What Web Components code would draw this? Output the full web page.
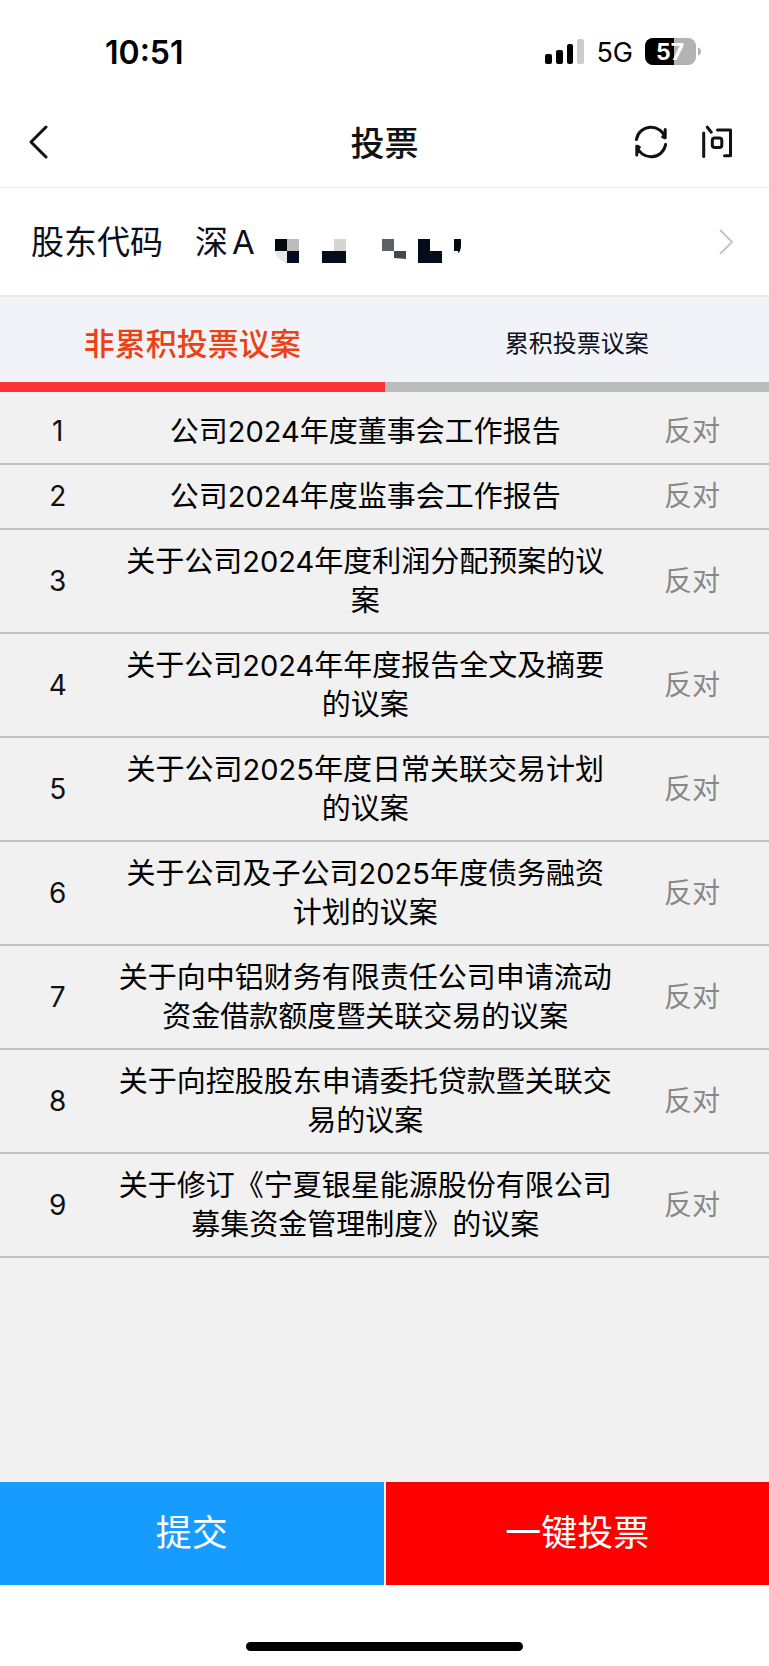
<!DOCTYPE html>
<html lang="zh-CN">
<head>
<meta charset="UTF-8">
<meta name="viewport" content="width=device-width, initial-scale=1">
<title>投票</title>
<style>
  body {
    margin: 0;
    background: #fff;
    font-family: Inter, "Noto Sans CJK SC", sans-serif;
    color: #000;
  }
</style>
</head>
<body>
<vote-app></vote-app>

<script>
class StatusBar extends HTMLElement {
  constructor() {
    super();
    this.attachShadow({ mode: 'open' });
    this.shadowRoot.innerHTML = `
      <style>
        :host {
          display: flex;
          align-items: center;
          justify-content: space-between;
          height: 104px;
          padding: 0 67px 0 105px;
          box-sizing: border-box;
        }
        time {
          font-size: 32px;
          font-weight: 600;
        }
        .right {
          display: flex;
          align-items: center;
          gap: 12px;
          font-size: 27px;
        }
        svg {
          display: block;
        }
      </style>
      <time>10:51</time>
      <div class="right">
        <svg width="39" height="26" viewBox="0 0 39 26" aria-hidden="true">
          <rect x="0" y="15" width="7" height="10" rx="2"/>
          <rect x="11" y="11" width="7" height="14" rx="2"/>
          <rect x="22" y="5" width="6" height="20" rx="2"/>
          <rect x="32" y="0" width="7" height="25" rx="2" fill="#ccc"/>
        </svg>
        <span>5G</span>
        <svg width="57" height="28" viewBox="0 0 57 28" role="img" aria-label="57%">
          <clipPath id="cell"><rect width="51" height="27" rx="8"/></clipPath>
          <g clip-path="url(#cell)">
            <rect width="51" height="27" fill="#b3b3b3"/>
            <rect width="29" height="27"/>
          </g>
          <path d="M53 9.500c4 1 4 7 0 8z" fill="#b3b3b3"/>
          <text x="25" y="22" text-anchor="middle" font-size="23" font-weight="700" fill="#fff">57</text>
        </svg>
      </div>
    `;
  }
}

class NavBar extends HTMLElement {
  constructor() {
    super();
    this.attachShadow({ mode: 'open' });
    this.shadowRoot.innerHTML = `
      <style>
        :host {
          display: grid;
          grid-template-columns: 1fr auto 1fr;
          align-items: center;
          height: 84px;
          padding: 0 0 8px;
          box-sizing: border-box;
          border-bottom: 1px solid #e8e8e8;
        }
        h1 {
          margin: 0;
          font-size: 34px;
          font-weight: 500;
          color: #111;
        }
        .back {
          justify-self: start;
          margin-left: 28px;
        }
        .actions {
          display: flex;
          justify-content: flex-end;
          gap: 32px;
          padding-right: 35px;
        }
        button {
          padding: 0;
          border: 0;
          background: none;
          color: #111;
          cursor: pointer;
        }
        svg {
          display: block;
          fill: none;
          stroke: currentColor;
          stroke-width: 3;
          stroke-linecap: round;
          stroke-linejoin: round;
        }
      </style>
      <button class="back" aria-label="返回">
        <svg width="22" height="34" viewBox="0 0 22 34"><path d="M18 2 3 17l15 15"/></svg>
      </button>
      <h1><slot></slot></h1>
      <div class="actions">
        <button aria-label="刷新">
          <svg width="34" height="34" viewBox="0 0 34 34">
            <path d="M2.400 14.500A14.800 14.800 0 0 1 31.200 12.800V4.600M31.200 12.800l-2.500-1"/>
            <path d="M31.600 19.500A14.800 14.800 0 0 1 2.800 21.200V30M2.800 21.200l2.500 1"/>
          </svg>
        </button>
        <button aria-label="问">
          <svg width="34" height="34" viewBox="0 0 34 34">
            <path d="M3.700 8v23.500M7.300 2.200l4 5M17.500 5h13v25.700h-6"/>
            <rect x="12.300" y="13" width="9.500" height="9.500" rx="2.500"/>
          </svg>
        </button>
      </div>
    `;
  }
}

class HolderCode extends HTMLElement {
  constructor() {
    super();
    this.attachShadow({ mode: 'open' });
    this.shadowRoot.innerHTML = `
      <style>
        :host {
          display: block;
          border-bottom: 2px solid #e8e8e8;
        }
        button {
          display: flex;
          align-items: center;
          width: 100%;
          height: 107px;
          padding: 0 35px 0 31px;
          border: 0;
          background: none;
          color: #0b0f1c;
          font: 33px/48px Inter, "Noto Sans CJK SC", sans-serif;
          cursor: pointer;
        }
        .label {
          margin-right: 32px;
        }
        .market {
          display: flex;
          gap: 4px;
          margin-right: 20px;
        }
        .arrow {
          margin-left: auto;
        }
        svg {
          display: block;
          flex: none;
        }
      </style>
      <button>
        <span class="label">股东代码</span>
        <span class="market"><slot></slot></span>
        <svg width="188" height="46" viewBox="0 -6 188 46" aria-hidden="true">
          <path fill="#030b12" d="M0 14h12v12H0zM179 14h7v6c0 4-1 7-3 8v-2h-4z"/>
          <path fill="#bcbcbf" d="M12 14h12v12H12z"/>
          <path fill="#e8e8e8" d="M0 26h12v12C6 36 1 33 0 26z"/>
          <path fill="#060a20" d="M12 26h12v12H12z"/>
          <path fill="#d5d5d5" d="M59 14h12v12H59z"/>
          <path fill="#050d1a" d="M47 26h24v12H47zM143 14h12v12h12v12h-24z"/>
          <path fill="#5e5f68" d="M107 14h12v12h-12z"/>
          <path fill="#45474e" d="M119 26h12v8l-12-1z"/>
        </svg>
        <svg class="arrow" width="16" height="28" viewBox="0 0 16 28" fill="none" stroke="#c4c4c4" stroke-width="2" aria-hidden="true">
          <path d="M2 2l12 12L2 26"/>
        </svg>
      </button>
    `;
  }
}

class VoteTabs extends HTMLElement {
  constructor() {
    super();
    this.attachShadow({ mode: 'open' });
    this.shadowRoot.innerHTML = `
      <style>
        :host {
          display: flex;
        }
        button {
          flex: 1;
          height: 95px;
          padding: 8px 0 0;
          border: 0;
          border-bottom: 10px solid #babdbc;
          background: #f2f3f8;
          color: #0b0f1c;
          font: 24px/36px Inter, "Noto Sans CJK SC", sans-serif;
          cursor: pointer;
        }
        button[aria-selected="true"] {
          border-color: #ff3333;
          color: #ea4215;
          font-size: 31px;
          font-weight: 500;
        }
      </style>
      <button role="tab" aria-selected="true">非累积投票议案</button>
      <button role="tab" aria-selected="false">累积投票议案</button>
    `;
    this.shadowRoot.querySelectorAll('button').forEach((tab) => {
      tab.addEventListener('click', () => this.select(tab));
    });
  }

  select(tab) {
    this.shadowRoot.querySelectorAll('button').forEach((item) => {
      item.setAttribute('aria-selected', String(item === tab));
    });
  }
}

class ProposalList extends HTMLElement {
  constructor() {
    super();
    this.attachShadow({ mode: 'open' });
    this.proposals = [
      '公司2024年度董事会工作报告',
      '公司2024年度监事会工作报告',
      '关于公司2024年度利润分配预案的议案',
      '关于公司2024年年度报告全文及摘要的议案',
      '关于公司2025年度日常关联交易计划的议案',
      '关于公司及子公司2025年度债务融资计划的议案',
      '关于向中铝财务有限责任公司申请流动资金借款额度暨关联交易的议案',
      '关于向控股股东申请委托贷款暨关联交易的议案',
      '关于修订《宁夏银星能源股份有限公司募集资金管理制度》的议案',
    ];
    this.render();
  }

  render() {
    const rows = this.proposals
      .map((title, index) => `
        <tr>
          <td>${index + 1}</td>
          <td class="title">${title}</td>
          <td class="vote">反对</td>
        </tr>`)
      .join('');
    this.shadowRoot.innerHTML = `
      <style>
        :host {
          display: block;
          padding-top: 8px;
          background: #f1f1f1;
        }
        table {
          width: 100%;
          table-layout: fixed;
          border-spacing: 0;
          font-size: 28px;
          line-height: 39px;
          text-align: center;
        }
        .no {
          width: 15%;
        }
        .choice {
          width: 20%;
        }
        td {
          padding: 12px 0;
          border-bottom: 2px solid #c2c2c2;
          color: #111;
        }
        td.title {
          color: #000;
          font-size: 29px;
        }
        td.vote {
          color: #888;
        }
      </style>
      <table>
        <colgroup><col class="no"><col><col class="choice"></colgroup>
        <tbody>${rows}</tbody>
      </table>
    `;
  }
}

class ActionBar extends HTMLElement {
  constructor() {
    super();
    this.attachShadow({ mode: 'open' });
    this.shadowRoot.innerHTML = `
      <style>
        :host {
          display: flex;
          gap: 2px;
          background: #f1f1f1;
        }
        button {
          flex: 1;
          height: 103px;
          padding: 0 0 2px;
          border: 0;
          color: #fff;
          font: 36px/54px Inter, "Noto Sans CJK SC", sans-serif;
          cursor: pointer;
        }
        .submit {
          background: #169cff;
        }
        .quick {
          background: #ff0000;
        }
      </style>
      <button class="submit">提交</button>
      <button class="quick">一键投票</button>
    `;
  }
}

class VoteApp extends HTMLElement {
  constructor() {
    super();
    this.attachShadow({ mode: 'open' });
    this.shadowRoot.innerHTML = `
      <style>
        :host {
          display: flex;
          flex-direction: column;
          min-height: 100vh;
        }
        proposal-list {
          flex: 1;
        }
        .home {
          display: flex;
          align-items: flex-end;
          justify-content: center;
          height: 81px;
          padding-bottom: 15px;
          box-sizing: border-box;
        }
        .home span {
          width: 36%;
          height: 9px;
          border-radius: 5px;
          background: #000;
        }
      </style>
      <status-bar></status-bar>
      <nav-bar>投票</nav-bar>
      <holder-code><span>深</span><span>A</span></holder-code>
      <vote-tabs role="tablist"></vote-tabs>
      <proposal-list></proposal-list>
      <action-bar></action-bar>
      <div class="home"><span></span></div>
    `;
  }
}

customElements.define('status-bar', StatusBar);
customElements.define('nav-bar', NavBar);
customElements.define('holder-code', HolderCode);
customElements.define('vote-tabs', VoteTabs);
customElements.define('proposal-list', ProposalList);
customElements.define('action-bar', ActionBar);
customElements.define('vote-app', VoteApp);
</script>
</body>
</html>
